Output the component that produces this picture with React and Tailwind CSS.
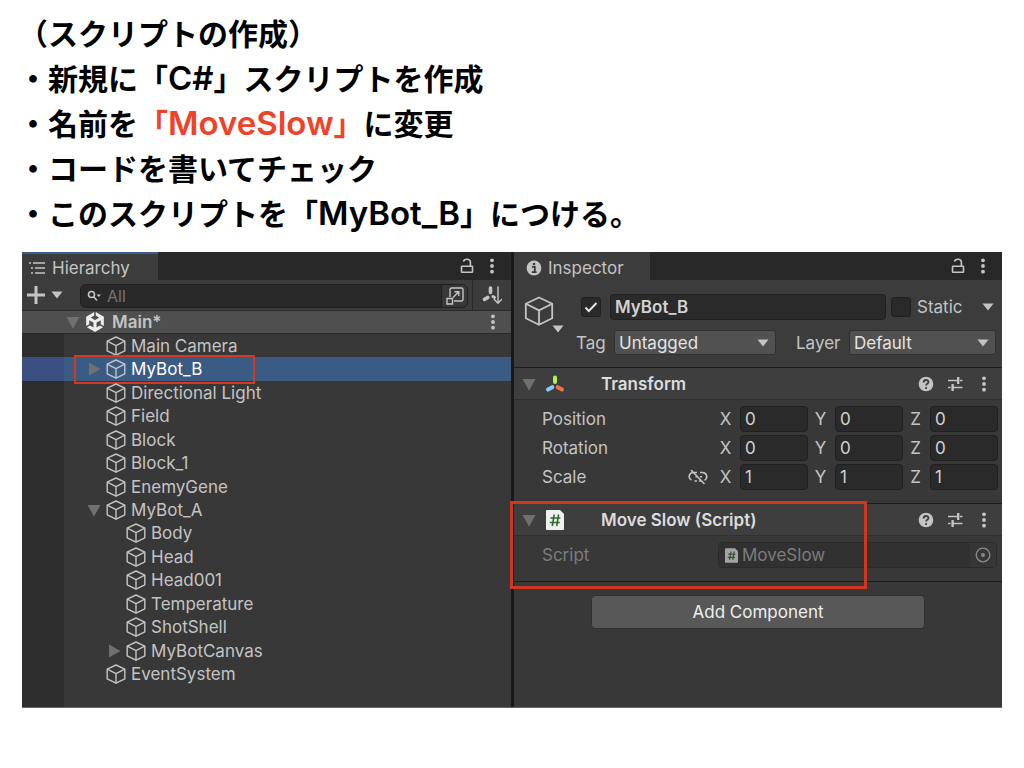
import React from 'react'
import { SiUnity } from 'react-icons/si'

const HIERARCHY = [
    { name: 'Main Camera' },
    { name: 'MyBot_B', arrow: 'right', selected: true },
    { name: 'Directional Light' },
    { name: 'Field' },
    { name: 'Block' },
    { name: 'Block_1' },
    { name: 'EnemyGene' },
    { name: 'MyBot_A', arrow: 'down' },
    { name: 'Body', child: true },
    { name: 'Head', child: true },
    { name: 'Head001', child: true },
    { name: 'Temperature', child: true },
    { name: 'ShotShell', child: true },
    { name: 'MyBotCanvas', child: true, arrow: 'right' },
    { name: 'EventSystem' },
]

const TRANSFORM = [
    { label: 'Position', value: '0' },
    { label: 'Rotation', value: '0' },
    { label: 'Scale', value: '1', linked: true },
]

const Cube = ({ className, stroke = 1.6 }) => (
    <svg viewBox="0 0 20 20" className={className} fill="none" stroke="currentColor" strokeWidth={stroke} strokeLinejoin="round">
        <path d="M10 1 18.8 5.2V14.8L10 19.2 1.2 14.8V5.2Z" />
        <path d="M1.2 5.2 10 9.6 18.8 5.2M10 9.6V19.2" />
    </svg>
)

const Foldout = ({ dir }) => (
    <svg viewBox="0 0 16 16" className="size-4 shrink-0 fill-[#707070]">
        {dir === 'down' && <path d="M1.5 3h13L8 14.5z" />}
        {dir === 'right' && <path d="M3 1.5v13L14.5 8z" />}
    </svg>
)

const Caret = ({ className }) => (
    <svg viewBox="0 0 12 8" className={`w-3 h-2 shrink-0 fill-[#c4c4c4] ${className || ''}`}>
        <path d="M.5.5h11L6 7.5z" />
    </svg>
)

const Lock = () => (
    <svg viewBox="0 0 14 16" className="w-[14px] h-4" fill="none" stroke="#c4c4c4" strokeWidth="1.6">
        <rect x="1.5" y="8.3" width="11" height="6" rx=".5" />
        <path d="M3.5 3.6C4 .5 10.2.4 10.4 4V8" />
    </svg>
)

const Kebab = () => (
    <svg viewBox="0 0 6 16" className="w-[6px] h-4 fill-[#c4c4c4]">
        <circle cx="3" cy="2.3" r="1.9" />
        <circle cx="3" cy="8" r="1.9" />
        <circle cx="3" cy="13.7" r="1.9" />
    </svg>
)

const Help = () => (
    <svg viewBox="0 0 16 16" className="size-4">
        <circle cx="8" cy="8" r="7.3" fill="#c4c4c4" />
        <path d="M5.6 6.4C5.6 3.2 10.5 3.3 10.5 6.1 10.5 7.9 8.1 7.8 8.1 9.6" fill="none" stroke="#3e3e3e" strokeWidth="1.8" />
        <circle cx="8.1" cy="12" r="1.1" fill="#3e3e3e" />
    </svg>
)

const Preset = () => (
    <svg viewBox="0 0 16 16" className="size-4" fill="none" stroke="#c4c4c4">
        <path d="M1 4.5h9M13 4.5h2.5M1 11.5h2.5M6 11.5h9.5" strokeWidth="1.5" />
        <path d="M11.2 1v7M5.6 8v7" strokeWidth="2.4" />
    </svg>
)

const ScriptIcon = ({ className }) => (
    <svg viewBox="0 0 18 20" className={className}>
        <path d="M1 0h13l4 4v15a1 1 0 0 1-1 1H1a1 1 0 0 1-1-1V1a1 1 0 0 1 1-1z" fill="#f0f0f0" />
        <path d="M8.2 4.5 6.3 16M12.6 4.5 10.7 16M4.4 8h10M3.8 12.5h10" fill="none" stroke="#2e6b2e" strokeWidth="1.6" />
    </svg>
)

const TransformIcon = () => (
    <svg viewBox="0 0 20 18" className="w-5 h-[18px]" fill="none" strokeWidth="4" strokeLinecap="round">
        <path d="M10 2.5V7" stroke="#b5f05a" />
        <path d="M7.3 12.2 3 14.6" stroke="#86cdf8" />
        <path d="M12.7 12.2 17 14.6" stroke="#ee7446" />
    </svg>
)

const IconButton = ({ label, className, children }) => (
    <button type="button" aria-label={label} className={`flex items-center justify-center shrink-0 ${className || ''}`}>
        {children}
    </button>
)

const TabBar = ({ children }) => (
    <div className="flex h-7 bg-[#282828]">
        {children}
        <div className="ml-auto flex items-center gap-[15px] pr-4">
            <IconButton label="Lock"><Lock /></IconButton>
            <IconButton label="Tab menu"><Kebab /></IconButton>
        </div>
    </div>
)

const TreeRow = ({ item }) => (
    <li className={`relative flex ${item.selected ? 'bg-[#3a5c84] text-white' : ''}`}>
        <div className={`w-[42px] shrink-0 ${item.selected ? 'bg-[#3c4f83]' : 'bg-[#2d2d2d]'}`} />
        <div className={`flex items-center ${item.child ? 'pl-[42px]' : 'pl-[22px]'}`}>
            <Foldout dir={item.arrow} />
            <Cube className="ml-1 size-5 shrink-0 text-[#c4c4c4]" stroke={1.4} />
            <span className="ml-[5px]">{item.name}</span>
        </div>
        {item.selected && <div className="absolute left-[52px] -top-[2px] w-[181px] h-[29px] border-2 border-[#d63a1e]" />}
    </li>
)

const Hierarchy = () => (
    <section className="min-w-0 bg-[#383838] flex flex-col">
        <TabBar>
            <h2 className="flex items-center gap-[6px] w-[136px] pl-[6px] border-t-2 border-[#3a5f8f] bg-[#3c3c3c] pt-[2px]">
                <svg viewBox="0 0 18 14" className="w-[18px] h-[14px]" fill="none" stroke="#c4c4c4" strokeWidth="1.5">
                    <path d="M1 2h2M5 2h12M3 7h2M7 7h10M3 12h2M7 12h10" />
                </svg>
                Hierarchy
            </h2>
        </TabBar>
        <div className="flex h-[30px] bg-[#3c3c3c]">
            <IconButton label="Create" className="gap-[6px] w-[46px]">
                <svg viewBox="0 0 18 18" className="size-[18px]" stroke="#c4c4c4" strokeWidth="3">
                    <path d="M9 0v18M0 9h18" />
                </svg>
                <Caret />
            </IconButton>
            <div className="flex flex-1 items-center h-6 mt-1 ml-3 mr-1 pl-[6px] bg-[#292929] border border-[#202020] rounded-md overflow-hidden">
                <svg viewBox="0 0 16 14" className="w-4 h-[14px]" fill="none" stroke="#c4c4c4" strokeWidth="1.6">
                    <circle cx="4.5" cy="5.5" r="3" />
                    <path d="M6.7 7.8 10 11.5" />
                    <path d="M9.5 5.5h4.5L11.8 8z" fill="#c4c4c4" stroke="none" />
                </svg>
                <input aria-label="Search hierarchy" placeholder="All" className="flex-1 min-w-0 ml-1 bg-transparent text-[16px] placeholder:text-[#757575] outline-none" />
                <IconButton label="Open search window" className="w-[26px] h-full bg-[#383838] border-l border-[#202020]">
                    <svg viewBox="0 0 18 18" className="size-[18px]" fill="none" stroke="#c4c4c4" strokeWidth="1.4">
                        <path d="M4 10V2.5a1.5 1.5 0 0 1 1.5-1.5h10A1.5 1.5 0 0 1 17 2.5v10a1.5 1.5 0 0 1-1.5 1.5H8" />
                        <path d="M1 11.5h5.5V17H1zM7 10.5l5.5-5.5M8.5 4.8h4.3V9" />
                    </svg>
                </IconButton>
            </div>
            <IconButton label="Sort" className="w-[39px] border-l border-[#292929]">
                <svg viewBox="0 0 20 19" className="w-5 h-[19px]" fill="none" stroke="#c4c4c4" strokeLinecap="round">
                    <path d="M8.5 2v4.5M5.8 11.5 2.5 13.4" strokeWidth="3.6" />
                    <path d="m11 10.5 1.5 1" strokeWidth="3" />
                    <path d="M16 1v16M12.3 13.5 16 17.3l3.6-3.8" strokeWidth="1.4" />
                </svg>
            </IconButton>
        </div>
        <div className="flex items-center h-6 pl-[43px] bg-[#4f4f4f] border-y border-[#2a2a2a] font-semibold">
            <Foldout dir="down" />
            <SiUnity className="ml-1 size-5 text-[#eeeeee]" />
            <span className="ml-[7px]">Main*</span>
            <IconButton label="Scene menu" className="ml-auto mr-[15px]"><Kebab /></IconButton>
        </div>
        <ul className="grid auto-rows-fr h-[352px]">
            {HIERARCHY.map((item) => <TreeRow key={item.name} item={item} />)}
        </ul>
        <div className="flex-1 w-[42px] bg-[#2d2d2d]" />
    </section>
)

const CheckBox = ({ id, label, checked }) => (
    <span className="relative size-5 shrink-0">
        <input id={id} type="checkbox" aria-label={label} defaultChecked={checked} className="peer block size-5 appearance-none rounded-[3px] bg-[#2a2a2a] border border-[#202020]" />
        <svg viewBox="0 0 20 20" className="absolute inset-0 size-5 hidden peer-checked:block pointer-events-none" fill="none" stroke="#e4e4e4" strokeWidth="2">
            <path d="m4.5 10.5 3.3 3.5L15.5 6" />
        </svg>
    </span>
)

const Dropdown = ({ id, value, className }) => (
    <div className={`relative min-w-0 ${className}`}>
        <select id={id} className="block w-full h-[25px] pl-1 appearance-none rounded-[3px] bg-[#515151] border border-[#303030] text-[#e4e4e4] leading-[22px]">
            <option>{value}</option>
        </select>
        <Caret className="absolute right-[7px] top-[9px] pointer-events-none" />
    </div>
)

const ComponentHeader = ({ icon, title }) => (
    <header className="flex items-center h-8 pl-[7px] pr-[15px] bg-[#3e3e3e] border-b border-[#303030]">
        <Foldout dir="down" />
        <div className="w-5 ml-[8px] flex justify-center">{icon}</div>
        <h3 className="ml-9 font-semibold text-[#dcdcdc]">{title}</h3>
        <div className="ml-auto flex items-center gap-[13px]">
            <IconButton label="Help"><Help /></IconButton>
            <IconButton label="Presets"><Preset /></IconButton>
            <IconButton label="Component menu" className="ml-[5px]"><Kebab /></IconButton>
        </div>
    </header>
)

const Inspector = () => (
    <section className="min-w-0 bg-[#383838] flex flex-col">
        <TabBar>
            <h2 className="flex items-center gap-[6px] w-[136px] pl-3 bg-[#3c3c3c] pt-[4px]">
                <svg viewBox="0 0 16 16" className="size-4">
                    <circle cx="8" cy="8" r="7.4" fill="#c4c4c4" />
                    <path d="M6 6.8h2.8V12M5.8 12.2h4.8" fill="none" stroke="#3c3c3c" strokeWidth="1.8" />
                    <circle cx="8" cy="4" r="1.3" fill="#3c3c3c" />
                </svg>
                Inspector
            </h2>
        </TabBar>

        <div className="flex pt-[14px] pb-3 pr-[6px] bg-[#3c3c3c]">
            <div className="relative w-[62px] shrink-0">
                <Cube className="ml-[10px] mt-[2px] size-[30px] text-[#c4c4c4]" stroke={1.2} />
                <Caret className="absolute left-[38px] top-[31px]" />
            </div>
            <div className="flex-1 min-w-0 space-y-[10px]">
                <div className="flex items-center h-[26px] pl-[5px]">
                    <CheckBox label="Active" checked />
                    <input aria-label="Name" defaultValue="MyBot_B" className="flex-1 min-w-0 h-full ml-[9px] mr-[5px] px-1 rounded-[4px] bg-[#2a2a2a] border border-[#202020] font-semibold text-[#d2d2d2]" />
                    <CheckBox id="static" />
                    <label htmlFor="static" className="ml-[6px] w-[65px]">Static</label>
                    <Caret className="mr-[2px]" />
                </div>
                <div className="flex items-center h-[25px]">
                    <label htmlFor="tag" className="w-[38px]">Tag</label>
                    <Dropdown id="tag" value="Untagged" className="flex-[162]" />
                    <label htmlFor="layer" className="w-[53px] ml-5">Layer</label>
                    <Dropdown id="layer" value="Default" className="flex-[147]" />
                </div>
            </div>
        </div>

        <section className="border-t border-[#1c1c1c] pb-[13px]">
            <ComponentHeader icon={<TransformIcon />} title="Transform" />
            <div className="pt-[6px] pl-7 pr-1 space-y-[3px]">
                {TRANSFORM.map((row) => (
                    <div key={row.label} className="flex items-center h-[26px]">
                        <span className="flex-1">{row.label}</span>
                        {row.linked && (
                            <svg viewBox="0 0 20 16" className="w-5 h-4 mr-[5px]" fill="none" stroke="#c4c4c4" strokeWidth="1.6">
                                <path d="M8 3.5H5.5a4 4 0 0 0-2 7.6M6.5 12H9M9 3.5H8M12 3.5h2.5a4.2 4.2 0 0 1 2 7.9M11 12h2.5M7.5 7.8h1.5M12 7.8h2M3 1l13.5 14" />
                            </svg>
                        )}
                        {['X', 'Y', 'Z'].map((axis) => (
                            <label key={axis} className="flex items-center h-full">
                                <span className="w-[27px] pr-[2px] text-center">{axis}</span>
                                <input defaultValue={row.value} className="w-[68px] h-full px-1 rounded-[4px] bg-[#2a2a2a] border border-[#202020] text-[#d2d2d2]" />
                            </label>
                        ))}
                    </div>
                ))}
            </div>
        </section>

        <section className="relative border-y border-[#1c1c1c] pb-[13px]">
            <ComponentHeader icon={<ScriptIcon className="w-[18px] h-5" />} title="Move Slow (Script)" />
            <div className="flex items-center pt-[6px] pl-7 pr-[5px] text-[#7c7c7c]">
                <label htmlFor="script" className="flex-1">Script</label>
                <div className="flex items-center w-[279px] h-[26px] pl-[6px] rounded-[4px] bg-[#313131] border border-[#2a2a2a]">
                    <ScriptIcon className="w-[13px] h-[15px] opacity-60" />
                    <input id="script" readOnly defaultValue="MoveSlow" className="flex-1 min-w-0 ml-1 bg-transparent" />
                    <IconButton label="Select script" className="w-[26px] h-full bg-[#363636]">
                        <svg viewBox="0 0 16 16" className="size-4" fill="none" stroke="#8a8a8a" strokeWidth="1.3">
                            <circle cx="8" cy="8" r="6.8" />
                            <circle cx="8" cy="8" r="2" fill="#8a8a8a" stroke="none" />
                        </svg>
                    </IconButton>
                </div>
            </div>
            <div className="absolute -left-1 -top-[3px] w-[357px] h-[88px] border-[3px] border-[#cf381e] pointer-events-none" />
        </section>

        <button type="button" className="self-center w-[334px] h-[34px] mt-[13px] rounded-[4px] bg-[#585858] border border-[#303030] text-[#eeeeee]">
            Add Component
        </button>
    </section>
)

const Latin = ({ children }) => <span className="font-['Inter'] font-semibold text-[33px]">{children}</span>

export default function App() {
    return (
        <main className="min-h-screen bg-white">
            <div className="pt-[10px] pl-[18px] font-['Noto_Sans_CJK_JP',sans-serif] font-bold text-[30px] text-black">
                <h1 className="h-[45px] leading-[45px]">（スクリプトの作成）</h1>
                <p className="h-[45px] leading-[45px]">・新規に「<Latin>C#</Latin>」スクリプトを作成</p>
                <p className="h-[45px] leading-[45px]">・名前を<span className="text-[#ee4328]">「<Latin>MoveSlow</Latin>」</span>に変更</p>
                <p className="h-[45px] leading-[45px]">・コードを書いてチェック</p>
                <p className="h-[45px] leading-[45px]">・このスクリプトを「<Latin>MyBot_B</Latin>」につける。</p>
            </div>

            <div className="grid grid-cols-[minmax(0,489fr)_minmax(0,488fr)] gap-[3px] mx-[22px] mt-[17px] min-h-[456px] bg-[#191919] border-b border-[#666666] font-['Inter',sans-serif] text-[17px] leading-[22px] text-[#c4c4c4]">
                <Hierarchy />
                <Inspector />
            </div>
        </main>
    )
}
